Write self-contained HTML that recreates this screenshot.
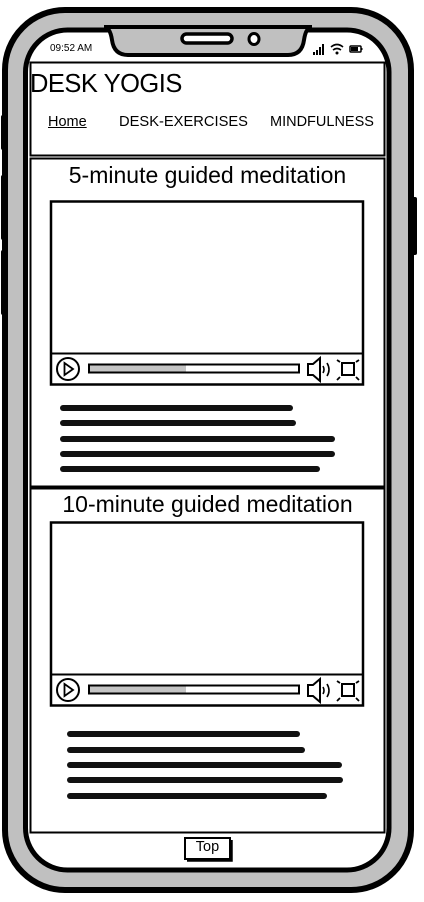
<!DOCTYPE html>
<html><head><meta charset="utf-8"><style>
html,body{margin:0;padding:0;background:#fff;width:424px;height:902px;overflow:hidden;position:relative;font-family:"Liberation Sans",sans-serif;}
.a{position:absolute;}
.bar{position:absolute;height:6px;background:#111;border-radius:3px;}
</style></head><body>
<svg class="a" style="left:0;top:0" width="424" height="902" viewBox="0 0 424 902">
<rect x="1" y="115" width="5" height="35" rx="2" fill="#000"/>
<rect x="1" y="175" width="5" height="65" rx="2" fill="#000"/>
<rect x="1" y="250" width="5" height="65" rx="2" fill="#000"/>
<rect x="411" y="197" width="6" height="58" rx="2" fill="#000"/>
<rect x="5" y="10" width="406" height="880" rx="60" fill="#c0c0c0" stroke="#000" stroke-width="6"/>
<rect x="25.5" y="30" width="363.5" height="840" rx="42" fill="#fff" stroke="#000" stroke-width="5"/>
<path d="M104 27 Q110 27 112 40 Q114 55 128 55 L288 55 Q302 55 304 40 Q306 27 312 27 Z" fill="#c0c0c0" stroke="#000" stroke-width="4"/>
<rect x="182" y="34" width="50" height="9" rx="4.5" fill="#fff" stroke="#000" stroke-width="3.5"/>
<ellipse cx="254" cy="39" rx="5" ry="5.5" fill="#fff" stroke="#000" stroke-width="3"/>
<rect x="313" y="52" width="2" height="3" fill="#000"/><rect x="316" y="50" width="2" height="5" fill="#000"/><rect x="319" y="47" width="2" height="8" fill="#000"/><rect x="322" y="44" width="2" height="11" fill="#000"/>
<path d="M331 47 Q337 42 343 47 M333 50 Q337 47 341 50" fill="none" stroke="#000" stroke-width="1.6"/><circle cx="337" cy="53" r="1.5" fill="#000"/>
<rect x="350" y="46" width="11" height="6" rx="1" fill="none" stroke="#000" stroke-width="1.5"/><rect x="351" y="47" width="7" height="4" fill="#000"/><rect x="361" y="48" width="1.5" height="2" fill="#000"/>
<rect x="30.5" y="62.5" width="354" height="93" fill="#fff" stroke="#000" stroke-width="2"/>
<rect x="30.5" y="158.5" width="354" height="328" fill="#fff" stroke="#000" stroke-width="2"/>
<rect x="30.5" y="488.5" width="354" height="344" fill="#fff" stroke="#000" stroke-width="2"/>
<g id="v1">
<rect x="51" y="201.5" width="312" height="183" fill="#fff" stroke="#000" stroke-width="2.5"/>
<line x1="51" y1="353.5" x2="363" y2="353.5" stroke="#000" stroke-width="2"/>
<circle cx="68" cy="369" r="11" fill="none" stroke="#000" stroke-width="2"/>
<path d="M64.5 363 L73 369 L64.5 375 Z" fill="none" stroke="#000" stroke-width="1.8"/>
<rect x="89" y="364.5" width="210" height="8" fill="#fff" stroke="#000" stroke-width="2"/>
<rect x="90" y="365.5" width="96" height="6" fill="#c4c4c4"/>
<path d="M308 364 L313 364 L320 358 L320 381 L313 375 L308 375 Z" fill="none" stroke="#000" stroke-width="2"/>
<path d="M323 366 Q325 369.5 323 373 M327 363 Q331 369.5 327 376" fill="none" stroke="#000" stroke-width="1.6"/>
<rect x="342" y="363" width="12" height="12" fill="none" stroke="#000" stroke-width="2"/>
<path d="M337 360 L340 362 M359 360 L356 362 M337 380 L340 377 M359 380 L356 377" stroke="#000" stroke-width="1.8"/>
</g>
<use href="#v1" x="0" y="321"/>
<rect x="185" y="838" width="45" height="21" fill="#fff" stroke="#000" stroke-width="2"/>
<path d="M187 860.5 L231.5 860.5 L231.5 840" fill="none" stroke="#000" stroke-width="2.5"/>
</svg>
<div class="a" style="left:50px;top:43px;font-size:10px;">09:52 AM</div>
<div class="a" style="left:30px;top:70px;font-size:25.5px;letter-spacing:-0.5px;">DESK YOGIS</div>
<div class="a" style="left:48px;top:114px;font-size:14.5px;text-decoration:underline;">Home</div>
<div class="a" style="left:119px;top:114px;font-size:14.7px;">DESK-EXERCISES</div>
<div class="a" style="left:270px;top:114px;font-size:14.5px;">MINDFULNESS</div>
<div class="a" style="left:20px;width:375px;text-align:center;top:162px;font-size:23px;">5-minute guided meditation</div>
<div class="a" style="left:20px;width:375px;text-align:center;top:491px;font-size:23px;">10-minute guided meditation</div>
<div class="a" style="left:185px;width:45px;text-align:center;top:839px;font-size:14.5px;">Top</div>
<div class="bar" style="left:60px;top:405px;width:233px"></div>
<div class="bar" style="left:60px;top:420px;width:236px"></div>
<div class="bar" style="left:60px;top:436px;width:275px"></div>
<div class="bar" style="left:60px;top:451px;width:275px"></div>
<div class="bar" style="left:60px;top:466px;width:260px"></div>
<div class="bar" style="left:67px;top:731px;width:233px"></div>
<div class="bar" style="left:67px;top:747px;width:238px"></div>
<div class="bar" style="left:67px;top:762px;width:275px"></div>
<div class="bar" style="left:67px;top:777px;width:276px"></div>
<div class="bar" style="left:67px;top:793px;width:260px"></div>
</body></html>
